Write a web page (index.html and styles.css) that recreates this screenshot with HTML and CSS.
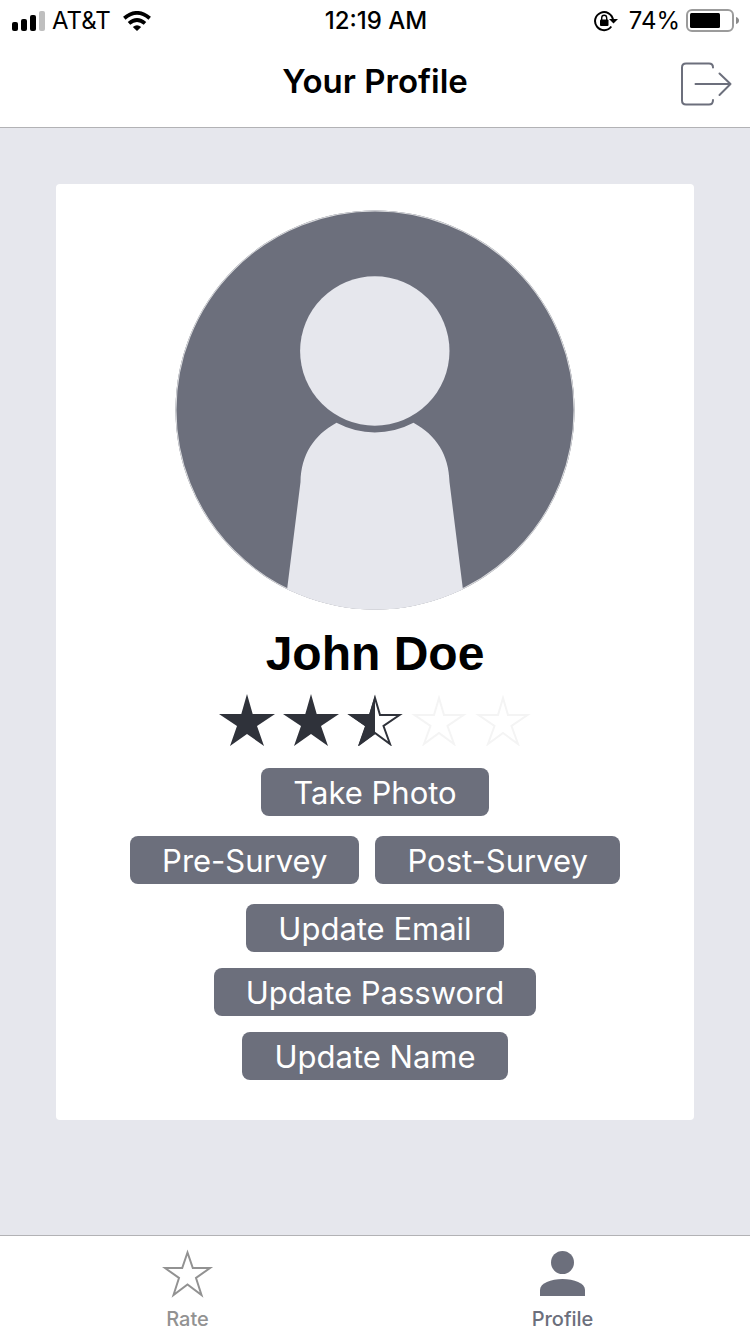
FILE: index.html
```html
<!DOCTYPE html>
<html lang="en">
<head>
<meta charset="utf-8">
<meta name="viewport" content="width=device-width, initial-scale=1">
<title>Your Profile</title>
<link rel="stylesheet" href="styles.css">
</head>
<body>
<header class="header">
  <div class="status">
    <div class="status-side">
      <svg width="34" height="20" viewBox="0 0 34 20" aria-hidden="true">
        <rect x="0" y="11" width="6" height="9" rx="2"/>
        <rect x="9" y="8" width="6" height="12" rx="2"/>
        <rect x="18" y="4" width="6" height="16" rx="2"/>
        <rect x="27" y="0" width="6" height="20" rx="2" fill="#bfbfbf"/>
      </svg>
      <span class="carrier">AT&amp;T</span>
      <svg width="28" height="20" viewBox="0 0 28 20" aria-hidden="true">
        <g fill="none" stroke="#000" stroke-width="3.8">
          <path d="M1.3 7.2Q14-3.400 26.700 7.200"/>
          <path d="M6 12.400Q14 5.600 22 12.400"/>
        </g>
        <path d="M9.800 16Q14 12.600 18.200 16L14 20Z"/>
      </svg>
    </div>
    <div class="clock">12:19 AM</div>
    <div class="status-side status-right">
      <svg width="24" height="22" viewBox="0 0 24 22" aria-hidden="true">
        <path d="M17.300 16.500A9 9 0 1 1 19 10" fill="none" stroke="#000" stroke-width="2"/>
        <path d="M15 9H24L19.500 13.500Z"/>
        <rect x="6" y="9.500" width="8.500" height="6.500" rx="1"/>
        <path d="M7.700 10V8A2.500 2.700 0 0 1 12.700 8V10" fill="none" stroke="#000" stroke-width="1.400"/>
      </svg>
      <span class="percent">74%</span>
      <svg width="54" height="24" viewBox="0 0 54 24" aria-hidden="true">
        <rect x="1" y="1" width="46" height="21" rx="5" fill="none" stroke="#9b9b9b" stroke-width="2"/>
        <rect x="4" y="4" width="30" height="15" rx="1.500"/>
        <path d="M50 8Q53 9 53 11.500Q53 14 50 15Z" fill="#8a8a8a"/>
      </svg>
    </div>
  </div>
  <div class="titlebar">
    <h1 class="title">Your Profile</h1>
    <button class="logout" type="button" aria-label="Log out">
      <svg width="52" height="44" viewBox="0 0 52 44" fill="none" stroke="#6c6f7c" stroke-width="2" stroke-linecap="round" stroke-linejoin="round" aria-hidden="true">
        <path d="M33 5.500Q33 1.500 29 1.500H6Q2 1.500 2 5.500V38.500Q2 42.500 6 42.500H29Q33 42.500 33 38"/>
        <path d="M15.500 22H50.500M39.500 11.500L50.500 22L39.500 33"/>
      </svg>
    </button>
  </div>
</header>

<main class="content">
  <section class="card">
    <svg class="avatar" viewBox="0 0 400 400" role="img" aria-label="Profile photo">
      <clipPath id="disc"><circle cx="200" cy="200" r="199.500"/></clipPath>
      <g clip-path="url(#disc)">
        <rect width="400" height="400" fill="#6c6f7c"/>
        <circle cx="200" cy="200" r="199.500" fill="none" stroke="#d8d9dc" stroke-width="2"/>
        <circle cx="199.800" cy="141" r="74.700" fill="#e6e7ed"/>
        <path d="M161.500 212.800Q180 222.500 199.800 222.500Q220 222.500 238.500 212.800C261 225 274 245 274.500 272L288 380V400H112V380L125.500 272C126 245 139 225 161.500 212.800Z" fill="#e6e7ed"/>
      </g>
    </svg>
    <h2 class="name">John Doe</h2>
    <svg class="stars" width="312" height="52" viewBox="0 0 312 52" role="img" aria-label="2.5 out of 5 stars">
      <defs>
        <path id="star" d="M28 0L33.700 20H56L38 32L45 52L28 40L11 52L18 32L0 20H22.300Z"/>
        <path id="star-line" d="M28 4L33 21H52.500L36.500 32L43 50L28 39L13 50L19.500 32L3.500 21H23Z" fill="none" stroke-width="2"/>
      </defs>
      <g fill="#2f323a">
        <use href="#star"/>
        <use href="#star" x="64"/>
        <path d="M156 1V40L139 52L146 32L129 20H150.300Z"/>
      </g>
      <use href="#star-line" x="128" stroke="#2f323a"/>
      <use href="#star-line" x="192" stroke="#f4f4f4"/>
      <use href="#star-line" x="256" stroke="#f4f4f4"/>
    </svg>
    <div class="actions">
      <button class="btn" type="button">Take Photo</button>
      <div class="pair">
        <button class="btn" type="button">Pre-Survey</button>
        <button class="btn" type="button">Post-Survey</button>
      </div>
      <div class="updates">
        <button class="btn" type="button">Update Email</button>
        <button class="btn" type="button">Update Password</button>
        <button class="btn" type="button">Update Name</button>
      </div>
    </div>
  </section>
</main>

<nav class="tabs">
  <a class="tab" href="#rate">
    <svg width="52" height="50" viewBox="0 0 52 50" fill="none" stroke="#929292" stroke-width="2" aria-hidden="true">
      <path d="M25.500 4.500L30.800 20H48L34 30L39.500 47L25.500 36.500L11.500 47L17 30L3 20H20.200Z"/>
    </svg>
    <span>Rate</span>
  </a>
  <a class="tab tab-active" href="#profile" aria-current="page">
    <svg width="52" height="50" viewBox="0 0 52 50" fill="#6c6f7c" aria-hidden="true">
      <circle cx="25.500" cy="14.500" r="11.500"/>
      <path d="M3 48V42C3 35 14 31 25.500 31S48 35 48 42V48Z"/>
    </svg>
    <span>Profile</span>
  </a>
</nav>
</body>
</html>
```
FILE: styles.css
```css
* {
  box-sizing: border-box;
}

body {
  margin: 0;
  min-height: 100vh;
  display: flex;
  flex-direction: column;
  background: #e6e7ed;
  color: #000;
  font-family: Inter, "Liberation Sans", sans-serif;
}

h1,
h2 {
  margin: 0;
}

svg {
  display: block;
  flex: none;
}

button {
  border: 0;
  font: inherit;
  cursor: pointer;
}

.header {
  background: #fff;
  border-bottom: 1px solid #b2b2b5;
}

.status {
  display: grid;
  grid-template-columns: 1fr auto 1fr;
  align-items: center;
  height: 41px;
  padding: 0 10px 0 12px;
  font-size: 24px;
}

.status-side {
  display: flex;
  align-items: center;
}

.status-right {
  justify-content: flex-end;
}

.carrier {
  margin: 0 12px 0 6px;
}

.clock {
  font-weight: 500;
}

.percent {
  margin: 0 6px 0 11px;
}

.titlebar {
  display: grid;
  grid-template-columns: 1fr auto 1fr;
  align-items: center;
  height: 86px;
  padding: 0 18px 6px;
}

.title {
  grid-column: 2;
  font-size: 33px;
  font-weight: 600;
}

.logout {
  justify-self: end;
  padding: 6px 0 0;
  background: none;
}

.content {
  flex: 1;
  padding: 56px;
}

.card {
  display: flex;
  flex-direction: column;
  align-items: center;
  padding: 26px 16px 40px;
  border-radius: 4px;
  background: #fff;
}

.avatar {
  width: 400px;
  max-width: 100%;
}

.name {
  margin: 18px 0 14px;
  font-family: "Liberation Sans", Arial, sans-serif;
  font-size: 48px;
  line-height: 52px;
}

.stars {
  margin-bottom: 22px;
}

.actions {
  display: flex;
  flex-direction: column;
  align-items: center;
  gap: 20px;
}

.pair {
  display: flex;
  flex-wrap: wrap;
  justify-content: center;
  gap: 16px;
}

.updates {
  display: flex;
  flex-direction: column;
  align-items: center;
  gap: 16px;
}

.btn {
  height: 48px;
  padding: 2px 32px 0;
  border-radius: 8px;
  background: #6c6f7c;
  color: #fff;
  font-size: 31px;
  line-height: 40px;
}

.tabs {
  display: flex;
  height: 99px;
  border-top: 1px solid #b2b2b5;
  background: #fff;
}

.tab {
  flex: 1;
  display: flex;
  flex-direction: column;
  align-items: center;
  padding-top: 12px;
  gap: 9px;
  color: #929292;
  font-size: 20px;
  font-weight: 500;
  line-height: 24px;
  text-decoration: none;
}

.tab-active {
  color: #6c6f7c;
}
```
